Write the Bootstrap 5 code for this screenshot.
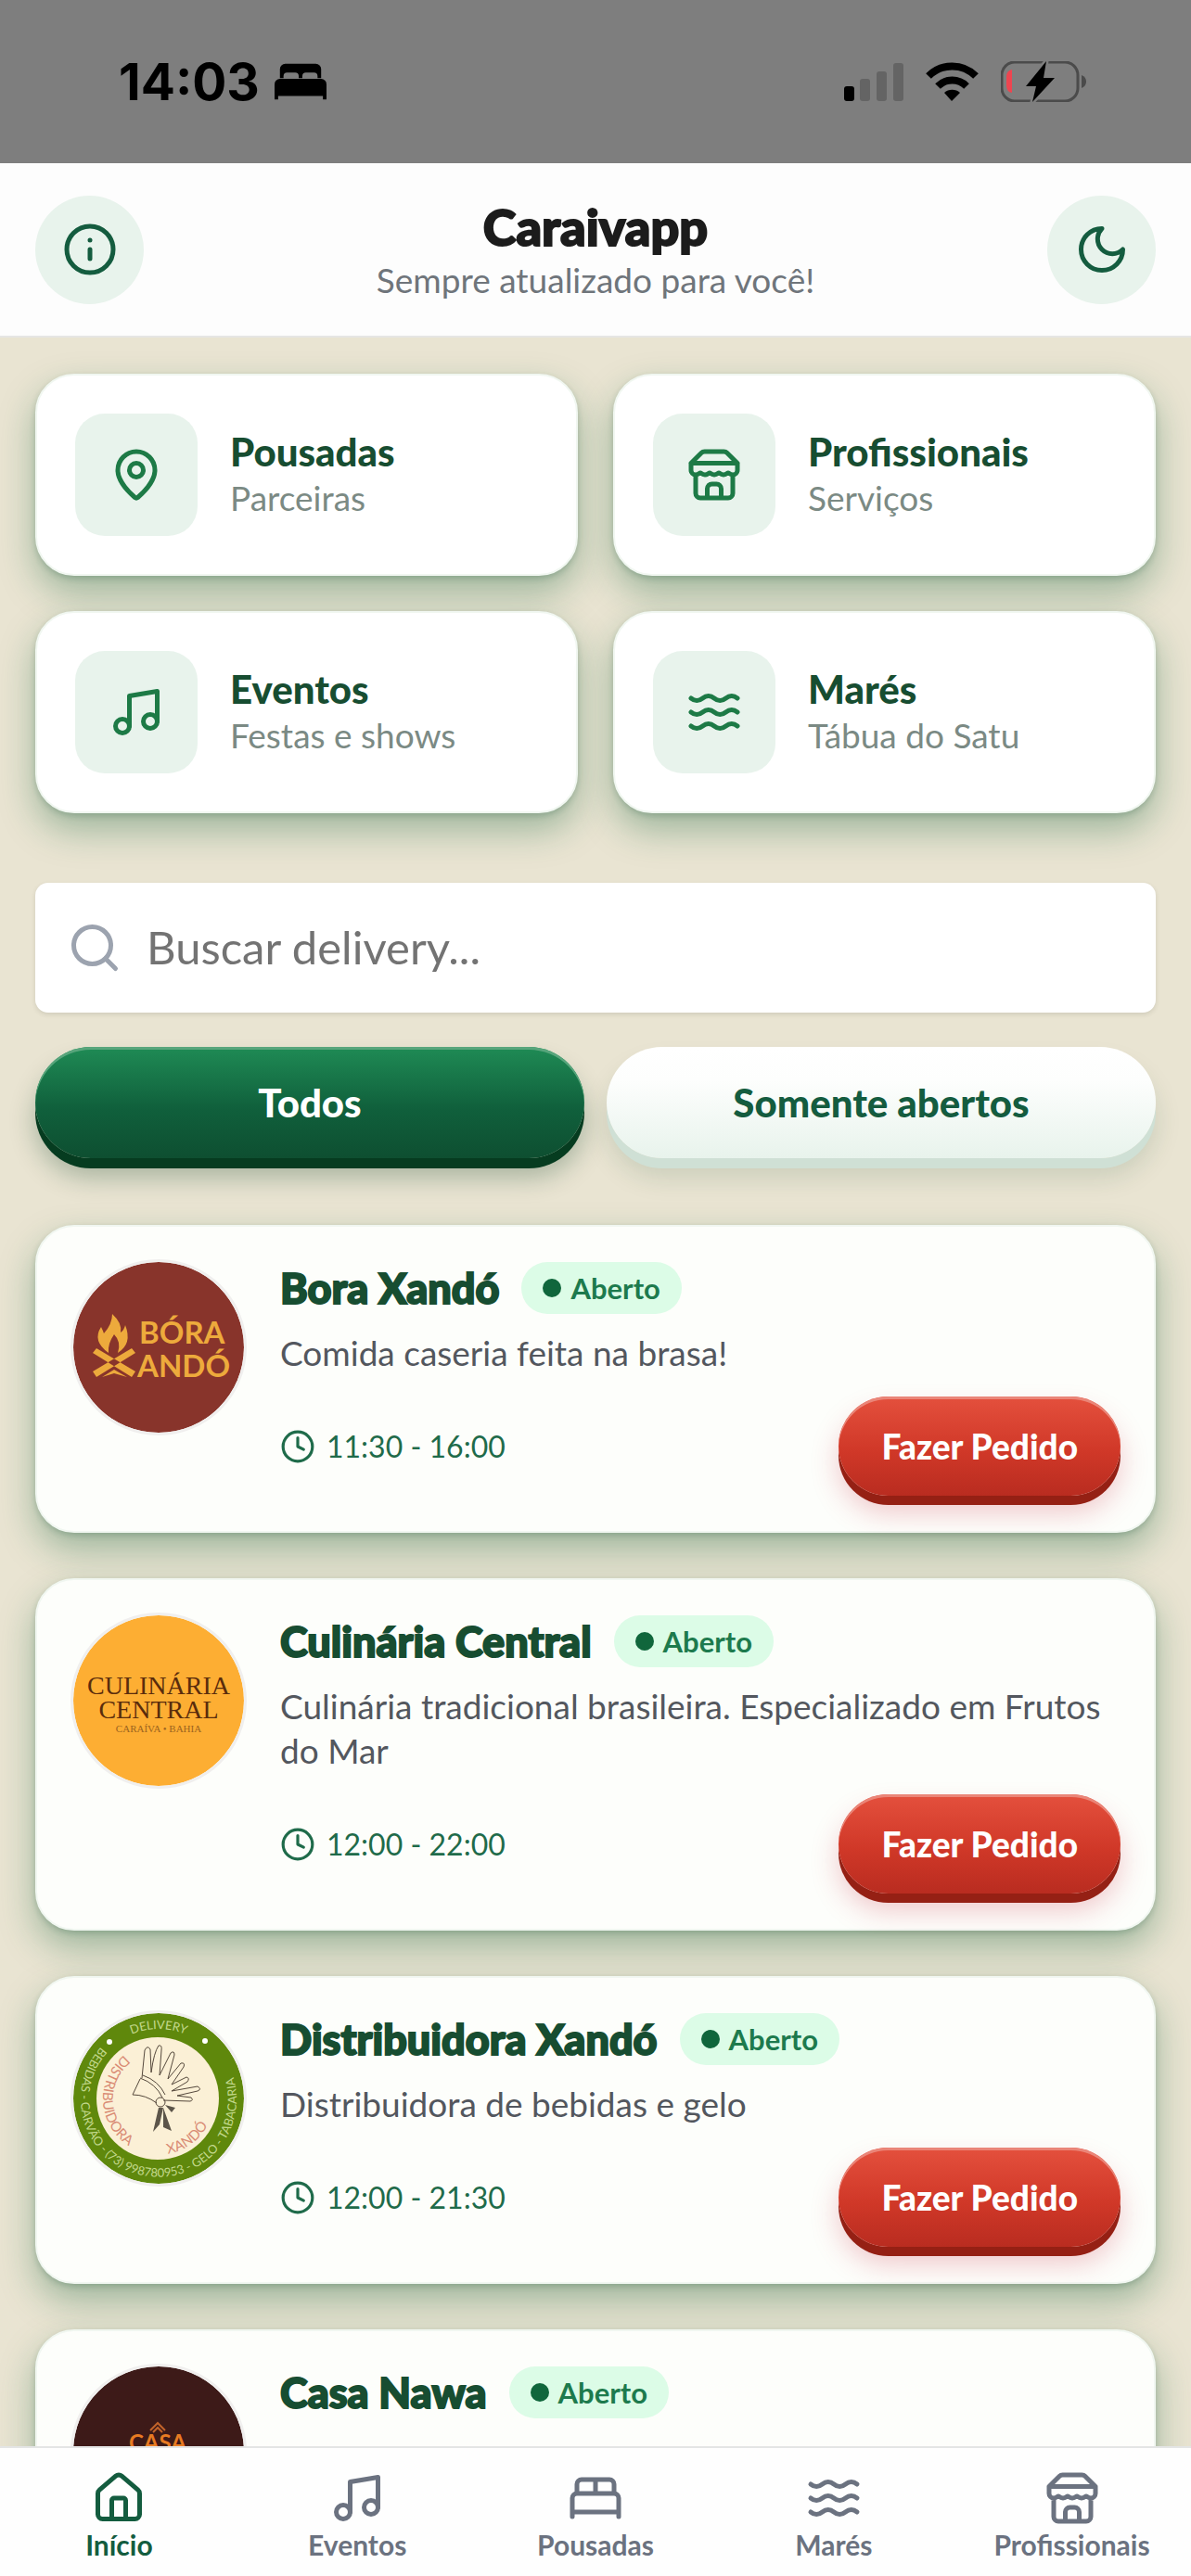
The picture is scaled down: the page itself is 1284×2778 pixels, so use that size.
<!DOCTYPE html>
<html lang="pt-BR">
<head>
  <meta charset="UTF-8" />
  <meta name="viewport" content="width=device-width, initial-scale=1.0" />
  <title>Caraivapp</title>
  <link href="https://cdn.jsdelivr.net/npm/bootstrap@5.3.2/dist/css/bootstrap.min.css" rel="stylesheet">
  <style>
    :root {
      --green: #1d7a46;
      --green-mid: #145c3f;
      --green-dark: #174d31;
      --mint: #e8f3ec;
    }
    body { font-family: Lato, "Open Sans", sans-serif; background: #e9e4d2; }
    .icon { width: 60px; height: 60px; fill: none; stroke: currentColor; stroke-width: 2; stroke-linecap: round; stroke-linejoin: round; flex: none; }

    .status-bar { background: #7e7e7e; height: 176px; padding: 0 113px 0 128px; color: #000; }
    .clock-text { font-family: Inter, sans-serif; font-size: 55px; font-weight: 700; line-height: 60px; }

    .app-header { background: #fdfdfd; border-bottom: 2px solid #e6e6e4; height: 188px; padding: 0 38px; }
    .app-title { padding-top: 6px; font-size: 54px; line-height: 60px; font-weight: 900; color: #1c1c1c; -webkit-text-stroke: 2px currentColor; }
    .app-tagline { font-size: 37px; line-height: 54px; color: #6f757b; }
    .round-btn { width: 117px; height: 117px; background: var(--mint); color: var(--green-mid); }
    .round-btn:hover { background: #d9ebe0; color: var(--green-mid); }

    .app-main { padding: 39px 38px; scrollbar-width: none; }
    .app-main::-webkit-scrollbar { display: none; }

    .quick-grid { --bs-gutter-x: 38px; --bs-gutter-y: 38px; }
    .raised { background: #fff; border: 2px solid #f1f7f1; border-radius: 42px; box-shadow: 0 3px 6px rgba(23, 77, 49, .2), 0 18px 38px rgba(23, 100, 60, .36); }
    .quick-link { padding: 41px; gap: 35px; height: 218px; }
    .quick-icon { width: 132px; height: 132px; border-radius: 32px; background: var(--mint); color: var(--green); }
    .quick-title { font-size: 42px; line-height: 50px; font-weight: 900; color: var(--green-dark); }
    .quick-sub { font-size: 37px; line-height: 50px; color: #7b8a84; }

    .search-box { margin-top: 75px; background: #fff; border-radius: 14px; height: 140px; padding: 0 34px; gap: 26px; box-shadow: 0 2px 5px rgba(60, 60, 40, .14); color: #9ca3af; }
    .search-box input { font-size: 49px; color: #333; }
    .search-box input::placeholder { color: #737373; opacity: 1; }

    .filters { margin-top: 37px; gap: 24px; }
    .filter-btn { height: 120px; margin-bottom: 11px; border-radius: 60px; font-size: 42px; font-weight: 900; color: var(--green-mid); background: linear-gradient(#fff, #fdfefd 30%, #e8f3ec); box-shadow: 0 11px 0 #cfe0d5, 0 20px 28px rgba(23, 77, 49, .15); }
    .filter-btn:hover { color: var(--green-mid); }
    .filter-btn.selected, .filter-btn.selected:hover { color: #fff; background: linear-gradient(#1f8b55, #10603c 55%, #0e4f31); box-shadow: inset 0 3px 0 #58a57c, 0 11px 0 #063c20, 0 20px 28px rgba(6, 60, 32, .3); }

    .shop-list { margin-top: 61px; gap: 49px; }
    .shop { padding: 38px 36px 38px 39px; gap: 39px; background: #fdfefb; }
    .shop-logo { width: 184px; height: 184px; flex: none; border-radius: 50%; box-shadow: 0 0 0 3px #f0efee; }
    .shop-name { font-size: 45px; line-height: 56px; font-weight: 900; color: var(--green-dark); -webkit-text-stroke: 2px currentColor; }
    .open-tag { height: 56px; padding: 0 23px; gap: 10px; border-radius: 28px; background: #dcfce7; color: #1d7a4d; font-size: 31px; font-weight: 700; }
    .open-tag::before { content: ""; width: 20px; height: 20px; border-radius: 50%; background: #10663c; }
    .shop-desc { margin: 18px 0 23px; font-size: 37px; line-height: 48px; color: #53575e; }
    .shop-hours { font-size: 32px; gap: 12px; color: #1f6b4a; }
    .shop-hours .icon { width: 38px; height: 38px; }
    .order-btn { height: 107px; padding: 0 46px; border-radius: 54px; font-size: 37px; font-weight: 900; color: #fff; background: linear-gradient(#e4503d, #d03828 55%, #b92c20); box-shadow: inset 0 3px 0 #ea8578, 0 10px 0 #952014, 0 18px 30px rgba(200, 40, 60, .26); }
    .order-btn:hover { color: #fff; }

    .tab-bar { height: 140px; background: #fefefe; border-top: 2px solid #e4e5e5; color: #6b7280; }
    .tab-bar a { font-size: 30px; line-height: 34px; font-weight: 700; padding-top: 24px; gap: 3px; color: inherit; }
    .tab-bar a.current { color: var(--green-mid); }
  </style>
</head>
<body>
  <svg class="d-none" aria-hidden="true">
    <symbol id="i-info" viewBox="0 0 24 24"><circle cx="12" cy="12" r="10"/><path d="M12 16v-4M12 8h.01"/></symbol>
    <symbol id="i-moon" viewBox="0 0 24 24"><path d="M12 3a6 6 0 0 0 9 9 9 9 0 1 1-9-9Z"/></symbol>
    <symbol id="i-pin" viewBox="0 0 24 24"><path d="M20 10c0 4.993-5.539 10.193-7.399 11.799a1 1 0 0 1-1.202 0C9.539 20.193 4 14.993 4 10a8 8 0 0 1 16 0"/><circle cx="12" cy="10" r="3"/></symbol>
    <symbol id="i-store" viewBox="0 0 24 24"><path d="m2 7 4.41-4.41A2 2 0 0 1 7.83 2h8.34a2 2 0 0 1 1.42.59L22 7M4 12v8a2 2 0 0 0 2 2h12a2 2 0 0 0 2-2v-8M15 22v-4a2 2 0 0 0-2-2h-2a2 2 0 0 0-2 2v4M2 7h20M22 7v3a2 2 0 0 1-2 2a2.7 2.7 0 0 1-1.59-.63.7.7 0 0 0-.82 0A2.7 2.7 0 0 1 16 12a2.7 2.7 0 0 1-1.59-.63.7.7 0 0 0-.82 0A2.7 2.7 0 0 1 12 12a2.7 2.7 0 0 1-1.59-.63.7.7 0 0 0-.82 0A2.7 2.7 0 0 1 8 12a2.7 2.7 0 0 1-1.59-.63.7.7 0 0 0-.82 0A2.7 2.7 0 0 1 4 12a2 2 0 0 1-2-2V7"/></symbol>
    <symbol id="i-music" viewBox="0 0 24 24"><path d="M9 18V5l12-2v13"/><circle cx="6" cy="18" r="3"/><circle cx="18" cy="16" r="3"/></symbol>
    <symbol id="i-waves" viewBox="0 0 24 24"><path d="M2 6c.6.5 1.2 1 2.5 1C7 7 7 5 9.5 5c2.6 0 2.4 2 5 2 2.5 0 2.5-2 5-2 1.3 0 1.9.5 2.5 1M2 12c.6.5 1.2 1 2.5 1 2.5 0 2.5-2 5-2 2.6 0 2.4 2 5 2 2.5 0 2.5-2 5-2 1.3 0 1.9.5 2.5 1M2 18c.6.5 1.2 1 2.5 1 2.5 0 2.5-2 5-2 2.6 0 2.4 2 5 2 2.5 0 2.5-2 5-2 1.3 0 1.9.5 2.5 1"/></symbol>
    <symbol id="i-search" viewBox="0 0 24 24"><circle cx="11" cy="11" r="8"/><path d="m21 21-4.3-4.3"/></symbol>
    <symbol id="i-clock" viewBox="0 0 24 24"><circle cx="12" cy="12" r="10"/><path d="M12 6v6l4 2"/></symbol>
    <symbol id="i-house" viewBox="0 0 24 24"><path d="M15 21v-8a1 1 0 0 0-1-1h-4a1 1 0 0 0-1 1v8M3 10a2 2 0 0 1 .709-1.528l7-5.999a2 2 0 0 1 2.582 0l7 5.999A2 2 0 0 1 21 10v9a2 2 0 0 1-2 2H5a2 2 0 0 1-2-2z"/></symbol>
    <symbol id="i-bed" viewBox="0 0 24 24"><path d="M2 20v-8a2 2 0 0 1 2-2h16a2 2 0 0 1 2 2v8M4 10V6a2 2 0 0 1 2-2h12a2 2 0 0 1 2 2v4M12 4v6M2 18h20"/></symbol>
  </svg>

  <div class="vh-100 d-flex flex-column overflow-hidden">
    <div class="status-bar d-flex align-items-center justify-content-between flex-shrink-0">
      <div class="d-flex align-items-center gap-3">
        <span class="clock-text">14:03</span>
        <svg width="56" height="40" viewBox="0 0 58 40" aria-hidden="true">
          <path d="M6 16V6a6 6 0 0 1 6-6h34a6 6 0 0 1 6 6v10h-4v-2a4 4 0 0 0-4-4H35a4 4 0 0 0-4 4v2h-4v-2a4 4 0 0 0-4-4H14a4 4 0 0 0-4 4v2Z"/>
          <path d="M0 40V23a6 6 0 0 1 6-6h46a6 6 0 0 1 6 6v17h-4v-4H4v4Z"/>
        </svg>
      </div>
      <div class="d-flex align-items-center gap-4">
        <svg width="64" height="42" viewBox="0 0 64 42" aria-hidden="true">
          <rect x="0" y="26" width="11" height="16" rx="3"/>
          <g fill="#646464"><rect x="17" y="18" width="11" height="24" rx="3"/><rect x="35" y="10" width="11" height="32" rx="3"/><rect x="53" y="1" width="11" height="41" rx="3"/></g>
        </svg>
        <svg width="57" height="42" viewBox="0 0 57 42" aria-hidden="true">
          <path d="M28 42 37 33a13 13 0 0 0-17 0Z"/>
          <path d="M13 26a22 22 0 0 1 31 0" fill="none" stroke="#000" stroke-width="8"/>
          <path d="M3 15a36 36 0 0 1 51 0" fill="none" stroke="#000" stroke-width="8"/>
        </svg>
        <svg width="92" height="44" viewBox="0 0 92 44" aria-hidden="true">
          <rect x="1" y="1" width="82" height="42" rx="14" fill="none" stroke="#4b4b4b" stroke-width="3"/>
          <path d="M87 15q5 2 5 7t-5 7Z" fill="#4b4b4b"/>
          <path d="M12 9v25q-6-1-6-8v-9q0-7 6-8Z" fill="#ee4550"/>
          <path d="M49 0 27 27h11l-4 17 24-26H46Z" stroke="#7e7e7e" stroke-width="5" paint-order="stroke"/>
        </svg>
      </div>
    </div>

    <header class="app-header d-flex align-items-center justify-content-between flex-shrink-0">
      <button type="button" class="btn round-btn rounded-circle border-0 p-0" aria-label="Informações"><svg class="icon"><use href="#i-info"/></svg></button>
      <div class="text-center">
        <h1 class="app-title mb-0">Caraivapp</h1>
        <p class="app-tagline mb-0">Sempre atualizado para você!</p>
      </div>
      <button type="button" class="btn round-btn rounded-circle border-0 p-0" aria-label="Modo escuro"><svg class="icon"><use href="#i-moon"/></svg></button>
    </header>

    <main class="app-main flex-fill overflow-auto">
      <div class="row quick-grid">
        <div class="col-6">
          <a href="#pousadas" class="raised quick-link d-flex align-items-center text-decoration-none">
            <span class="quick-icon d-flex align-items-center justify-content-center flex-shrink-0"><svg class="icon"><use href="#i-pin"/></svg></span>
            <span><span class="quick-title d-block">Pousadas</span><span class="quick-sub d-block">Parceiras</span></span>
          </a>
        </div>
        <div class="col-6">
          <a href="#profissionais" class="raised quick-link d-flex align-items-center text-decoration-none">
            <span class="quick-icon d-flex align-items-center justify-content-center flex-shrink-0"><svg class="icon"><use href="#i-store"/></svg></span>
            <span><span class="quick-title d-block">Profissionais</span><span class="quick-sub d-block">Serviços</span></span>
          </a>
        </div>
        <div class="col-6">
          <a href="#eventos" class="raised quick-link d-flex align-items-center text-decoration-none">
            <span class="quick-icon d-flex align-items-center justify-content-center flex-shrink-0"><svg class="icon"><use href="#i-music"/></svg></span>
            <span><span class="quick-title d-block">Eventos</span><span class="quick-sub d-block">Festas e shows</span></span>
          </a>
        </div>
        <div class="col-6">
          <a href="#mares" class="raised quick-link d-flex align-items-center text-decoration-none">
            <span class="quick-icon d-flex align-items-center justify-content-center flex-shrink-0"><svg class="icon"><use href="#i-waves"/></svg></span>
            <span><span class="quick-title d-block">Marés</span><span class="quick-sub d-block">Tábua do Satu</span></span>
          </a>
        </div>
      </div>

      <div class="search-box d-flex align-items-center">
        <label for="search" aria-label="Buscar delivery"><svg class="icon d-block"><use href="#i-search"/></svg></label>
        <input type="search" id="search" class="form-control border-0 shadow-none bg-transparent p-0" placeholder="Buscar delivery...">
      </div>

      <div class="filters d-flex">
        <button type="button" class="btn filter-btn selected border-0 w-50" aria-pressed="true">Todos</button>
        <button type="button" class="btn filter-btn border-0 w-50" aria-pressed="false">Somente abertos</button>
      </div>

      <div class="shop-list d-flex flex-column">
        <article class="raised shop d-flex align-items-start">
          <svg class="shop-logo" viewBox="0 0 184 184" role="img" aria-label="Bora Xandó">
            <circle cx="92" cy="92" r="92" fill="#88342b"/>
            <g fill="#edaa3c">
              <path d="M42 56q11 10 9 20 4-3 5-8 8 20-8 30 4-12-4-20-7 10-6 20-18-13-8-28 2 4 3 7 9-10 9-21Z"/>
              <path d="m21 98 4-5 42 25-4 6Zm46 0-4-5-42 25 4 6ZM31 124l13-8 14 8-14-4Z"/>
              <g font-family="Lato, sans-serif" font-size="33" font-weight="700"><text x="71" y="88">BÓRA</text><text x="69" y="124">ANDÓ</text></g>
            </g>
          </svg>
          <div class="flex-fill">
            <div class="d-flex align-items-center gap-4">
              <h2 class="shop-name mb-0">Bora Xandó</h2>
              <span class="open-tag d-flex align-items-center">Aberto</span>
            </div>
            <p class="shop-desc">Comida caseria feita na brasa!</p>
            <div class="d-flex align-items-center justify-content-between">
              <span class="shop-hours d-flex align-items-center"><svg class="icon"><use href="#i-clock"/></svg>11:30 - 16:00</span>
              <button type="button" class="btn order-btn border-0">Fazer Pedido</button>
            </div>
          </div>
        </article>

        <article class="raised shop d-flex align-items-start">
          <svg class="shop-logo" viewBox="0 0 184 184" role="img" aria-label="Culinária Central">
            <circle cx="92" cy="92" r="92" fill="#fdae33"/>
            <g font-family="Liberation Serif, serif" fill="#5a2c0c" text-anchor="middle" font-size="28">
              <text x="92" y="85">CULINÁRIA</text>
              <text x="92" y="111">CENTRAL</text>
              <text x="92" y="126" font-size="11" fill="#9c6420">CARAÍVA • BAHIA</text>
            </g>
          </svg>
          <div class="flex-fill">
            <div class="d-flex align-items-center gap-4">
              <h2 class="shop-name mb-0">Culinária Central</h2>
              <span class="open-tag d-flex align-items-center">Aberto</span>
            </div>
            <p class="shop-desc">Culinária tradicional brasileira. Especializado em Frutos do Mar</p>
            <div class="d-flex align-items-center justify-content-between">
              <span class="shop-hours d-flex align-items-center"><svg class="icon"><use href="#i-clock"/></svg>12:00 - 22:00</span>
              <button type="button" class="btn order-btn border-0">Fazer Pedido</button>
            </div>
          </div>
        </article>

        <article class="raised shop d-flex align-items-start">
          <svg class="shop-logo" viewBox="0 0 184 184" role="img" aria-label="Distribuidora Xandó">
            <defs>
              <path id="ring-top" d="M17 92a75 75 0 0 1 150 0"/>
              <path id="ring-bottom" d="M31 35A84 84 0 1 0 153 35"/>
              <path id="ring-inner" d="M58 43A60 60 0 1 0 152 92"/>
            </defs>
            <circle cx="92" cy="92" r="92" fill="#5f880c"/>
            <circle cx="91" cy="92" r="66" fill="#fbf0d6"/>
            <g font-family="Lato, sans-serif" font-size="13" fill="#c3d98c">
              <text text-anchor="middle"><textPath href="#ring-top" startOffset="50%">DELIVERY</textPath></text>
              <text><textPath href="#ring-bottom" startOffset="2">BEBIDAS - CARVÃO - (73) 998780953 - GELO - TABACARIA</textPath></text>
            </g>
            <circle cx="39" cy="31" r="3" fill="#fff"/>
            <circle cx="142" cy="30" r="3" fill="#fff"/>
            <g font-family="Lato, sans-serif" font-size="15" fill="#d98b74">
              <text><textPath href="#ring-inner" startOffset="4">DISTRIBUIDORA</textPath></text>
              <text><textPath href="#ring-inner" startOffset="162">XANDÓ</textPath></text>
            </g>
            <g fill="none" stroke="#55483c" stroke-width="1" stroke-linejoin="round">
              <path d="M74 70 77 40q3-6 6-1l1 25q3-22 8-29 4-1 3 5l-2 27 12-24q4-3 4 2l-7 26 14-17q5-1 3 4l-13 19 16-8q4 1 1 5L106 84l28-5q5 3 0 5l-22 5 15 2q3 3-1 4l-29-1"/>
              <path d="M72 70q17 6 24 21M75 67q17 6 24 21M72 71 64 88q14 0 26 9"/>
              <circle cx="94" cy="96" r="5"/>
            </g>
            <path d="m92 102-6 26 7-8 4-18Zm5 0 9 25-9-4ZM99 99l11 3-4 5Z" fill="#5c554a"/>
          </svg>
          <div class="flex-fill">
            <div class="d-flex align-items-center gap-4">
              <h2 class="shop-name mb-0">Distribuidora Xandó</h2>
              <span class="open-tag d-flex align-items-center">Aberto</span>
            </div>
            <p class="shop-desc">Distribuidora de bebidas e gelo</p>
            <div class="d-flex align-items-center justify-content-between">
              <span class="shop-hours d-flex align-items-center"><svg class="icon"><use href="#i-clock"/></svg>12:00 - 21:30</span>
              <button type="button" class="btn order-btn border-0">Fazer Pedido</button>
            </div>
          </div>
        </article>

        <article class="raised shop d-flex align-items-start">
          <svg class="shop-logo" viewBox="0 0 184 184" role="img" aria-label="Casa Nawa">
            <circle cx="92" cy="92" r="92" fill="#3d1a18"/>
            <path d="m83 69 8-8 8 8M86 71l5-5 5 5" fill="none" stroke="#c2632a" stroke-width="2"/>
            <text x="91" y="91" font-family="Lato, sans-serif" font-weight="700" font-size="24" fill="#e87b22" text-anchor="middle">CASA</text>
          </svg>
          <div class="flex-fill">
            <div class="d-flex align-items-center gap-4">
              <h2 class="shop-name mb-0">Casa Nawa</h2>
              <span class="open-tag d-flex align-items-center">Aberto</span>
            </div>
          </div>
        </article>
      </div>
    </main>

    <nav class="tab-bar d-flex flex-shrink-0 text-center" aria-label="Principal">
      <a href="#inicio" class="current d-flex flex-column align-items-center text-decoration-none w-100" aria-current="page"><svg class="icon"><use href="#i-house"/></svg>Início</a>
      <a href="#eventos" class="d-flex flex-column align-items-center text-decoration-none w-100"><svg class="icon"><use href="#i-music"/></svg>Eventos</a>
      <a href="#pousadas" class="d-flex flex-column align-items-center text-decoration-none w-100"><svg class="icon"><use href="#i-bed"/></svg>Pousadas</a>
      <a href="#mares" class="d-flex flex-column align-items-center text-decoration-none w-100"><svg class="icon"><use href="#i-waves"/></svg>Marés</a>
      <a href="#profissionais" class="d-flex flex-column align-items-center text-decoration-none w-100"><svg class="icon"><use href="#i-store"/></svg>Profissionais</a>
    </nav>
  </div>

  <script src="https://cdn.jsdelivr.net/npm/bootstrap@5.3.2/dist/js/bootstrap.bundle.min.js"></script>
</body>
</html>
